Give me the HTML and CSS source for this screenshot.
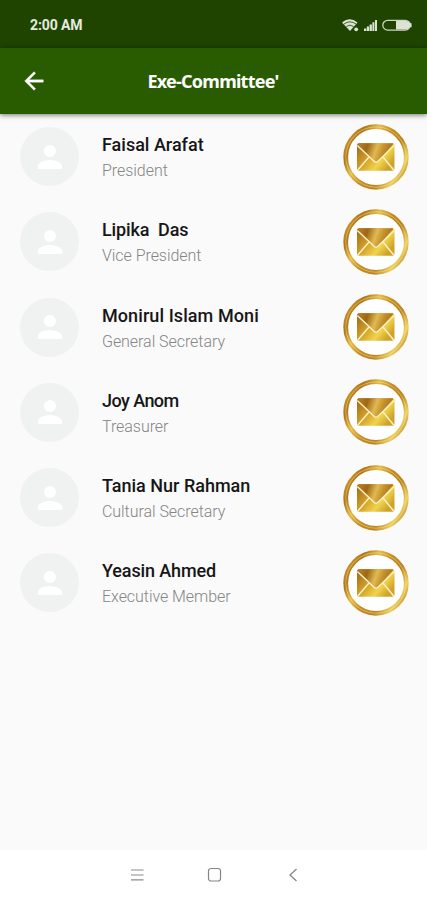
FILE: index.html
```html
<!DOCTYPE html>
<html lang="en">
<head>
<meta charset="utf-8">
<title>Exe-Committee'</title>
<link rel="stylesheet" href="styles.css">
</head>
<body>
<svg class="defs" width="0" height="0" aria-hidden="true">
  <defs>
    <linearGradient id="ring" x1="0" y1="0.2" x2="1" y2="0.8">
      <stop offset="0" stop-color="#d0982a"/><stop offset=".14" stop-color="#b0741b"/>
      <stop offset=".32" stop-color="#e3bc4c"/><stop offset=".5" stop-color="#c58a22"/>
      <stop offset=".7" stop-color="#bd841e"/><stop offset=".88" stop-color="#ecd062"/>
      <stop offset="1" stop-color="#c7922b"/>
    </linearGradient>
    <linearGradient id="gold" x1="0" y1="0" x2="1" y2=".6">
      <stop offset="0" stop-color="#9c6411"/><stop offset=".22" stop-color="#b98220"/>
      <stop offset=".5" stop-color="#d8a92e"/><stop offset=".75" stop-color="#f0d44c"/>
      <stop offset="1" stop-color="#cfa22a"/>
    </linearGradient>
    <linearGradient id="flap" x1="0" y1="0" x2="1" y2=".2">
      <stop offset="0" stop-color="#b98224"/><stop offset=".28" stop-color="#9f6714"/>
      <stop offset=".55" stop-color="#e0b952"/><stop offset=".75" stop-color="#c5912c"/><stop offset="1" stop-color="#a87018"/>
    </linearGradient>
    <symbol id="person" viewBox="0 0 24 24"><path d="M12 12a4 4 0 1 0 0-8 4 4 0 0 0 0 8zm0 2c-2.700 0-8 1.340-8 4v2h16v-2c0-2.660-5.300-4-8-4z" fill="#fff"/></symbol>
    <symbol id="mail" viewBox="0 0 66 66">
      <circle cx="33" cy="33" r="30.300" fill="#fff" stroke="url(#ring)" stroke-width="4.800"/>
      <circle cx="33" cy="33" r="30.200" fill="none" stroke="#fae99a" stroke-width=".8" opacity=".6"/>
      <rect x="14" y="19.200" width="37.500" height="27.600" rx="2" fill="url(#gold)"/>
      <path d="M16 19.200h33.500q1 0 .5 1L34.500 38q-1.500 1.700-3 0L15.500 20.200q-.5-1 .5-1z" fill="url(#flap)"/>
      <path d="M14.300 21.500L31.300 37.500q1.700 1.600 3.400 0L51.200 21.500M14.800 46L26 33M50.700 46L40 33" fill="none" stroke="#fbf1c4" stroke-width="1.500"/>
    </symbol>
  </defs>
</svg>
<div class="screen">
  <div class="status">
    <span class="time">2:00 AM</span>
    <svg class="indicators" width="72" height="16" viewBox="0 0 72 16" fill="#dce3d4">
      <path d="M1 5.500Q8.500-.8 16.500 5.500L9 14z"/>
      <path d="M3 7q6-4.300 12 0M5.300 9.500q3.700-2.800 7.400 0" fill="none" stroke="#1f4400" stroke-width=".8"/>
      <circle cx="15.200" cy="12.300" r="1.900"/>
      <path d="M23 11.500h2.300V14H23zM25.800 9.500h2.300V14h-2.300zM28.600 7.500h2.300V14h-2.300zM31.400 5.300h2V14h-2zM34 3h2v11h-2z"/>
      <rect x="41.800" y="3.300" width="27.400" height="9.800" rx="4.900" fill="none" stroke="#cbd5c1" stroke-width="1.300"/>
      <path d="M55 4h10a4.200 4.200 0 0 1 0 8.400H55z"/><path d="M69 6.200h1.600v4H69z"/>
    </svg>
  </div>
  <header class="appbar">
    <svg class="back" width="28" height="28" viewBox="0 0 24 24"><path d="M20 11H7.830l5.590-5.590L12 4l-8 8 8 8 1.410-1.410L7.830 13H20z" fill="#fff" stroke="#fff" stroke-width=".3"/></svg>
    <h1 class="title">Exe-Committee'</h1>
  </header>
  <main class="list">
    <div class="row"><div class="avatar"><svg><use href="#person"/></svg></div><div class="info"><div class="name">Faisal Arafat</div><div class="role">President</div></div><svg class="mail"><use href="#mail"/></svg></div>
    <div class="row"><div class="avatar"><svg><use href="#person"/></svg></div><div class="info"><div class="name snug">Lipika&nbsp; Das</div><div class="role">Vice President</div></div><svg class="mail"><use href="#mail"/></svg></div>
    <div class="row"><div class="avatar"><svg><use href="#person"/></svg></div><div class="info"><div class="name wide">Monirul Islam Moni</div><div class="role">General Secretary</div></div><svg class="mail"><use href="#mail"/></svg></div>
    <div class="row"><div class="avatar"><svg><use href="#person"/></svg></div><div class="info"><div class="name tight">Joy Anom</div><div class="role">Treasurer</div></div><svg class="mail"><use href="#mail"/></svg></div>
    <div class="row"><div class="avatar"><svg><use href="#person"/></svg></div><div class="info"><div class="name">Tania Nur Rahman</div><div class="role">Cultural Secretary</div></div><svg class="mail"><use href="#mail"/></svg></div>
    <div class="row"><div class="avatar"><svg><use href="#person"/></svg></div><div class="info"><div class="name snug">Yeasin Ahmed</div><div class="role">Executive Member</div></div><svg class="mail"><use href="#mail"/></svg></div>
  </main>
  <nav class="nav">
    <svg width="14" height="14" viewBox="0 0 14 14"><path d="M1 2h12.500M1 7h12.500M1 11.800h12.500" stroke="#8c8c8c" stroke-width="1.200"/></svg>
    <svg width="16" height="16" viewBox="0 0 16 16"><rect x="1.500" y="1.500" width="12" height="12.500" rx="2.500" fill="none" stroke="#858585" stroke-width="1.200"/></svg>
    <svg width="14" height="14" viewBox="0 0 14 14"><path d="M10.500 1L4 7l6.500 6" fill="none" stroke="#858585" stroke-width="1.300"/></svg>
  </nav>
</div>
</body>
</html>
```
FILE: styles.css
```css
* { box-sizing: border-box; }
body { margin: 0; background: #fafafa; font-family: Roboto, "Noto Sans", sans-serif; }
.defs { position: absolute; }
.screen { width: 427px; height: 900px; display: flex; flex-direction: column; overflow: hidden; }
.status { height: 48px; flex: none; background: #1f4400; display: flex; align-items: center; justify-content: space-between; padding: 2px 14px 0 30px; }
.time { font-size: 14px; font-weight: 700; color: #e4eadf; letter-spacing: -.1px; }
.appbar { height: 65.500px; flex: none; background: #295c00; display: grid; grid-template-columns: 42px 1fr 42px; align-items: center; padding: 0 21px 0 20px; box-shadow: 0 1px 5px rgba(0,0,0,.55); z-index: 1; }
.title { margin: 0; text-align: center; color: #fff; font-family: "Noto Sans", sans-serif; font-size: 18px; line-height: 24px; font-weight: 700; letter-spacing: -.75px; white-space: nowrap; }
.list { flex: 1; padding-top: .5px; }
.row { height: 85.250px; display: flex; align-items: center; padding: 0 18.500px 0 20px; }
.avatar { width: 59px; height: 59px; border-radius: 50%; background: #f0f1f1; display: flex; align-items: center; justify-content: center; }
.avatar svg { width: 36px; height: 36px; }
.info { flex: 1; margin-left: 23px; padding-top: 2px; white-space: nowrap; }
.name { font-size: 18px; line-height: 27px; font-weight: 500; color: #161616; }
.name.snug { letter-spacing: -.12px; }
.name.tight { letter-spacing: -.55px; }
.name.wide { letter-spacing: .08px; }
.role { font-size: 16px; line-height: 26px; font-weight: 300; color: #858585; letter-spacing: -.05px; }
.mail { width: 66px; height: 66px; flex: none; }
.nav { height: 50px; flex: none; background: #fff; display: flex; align-items: center; justify-content: space-between; padding: 0 127px 0 130px; }
```
